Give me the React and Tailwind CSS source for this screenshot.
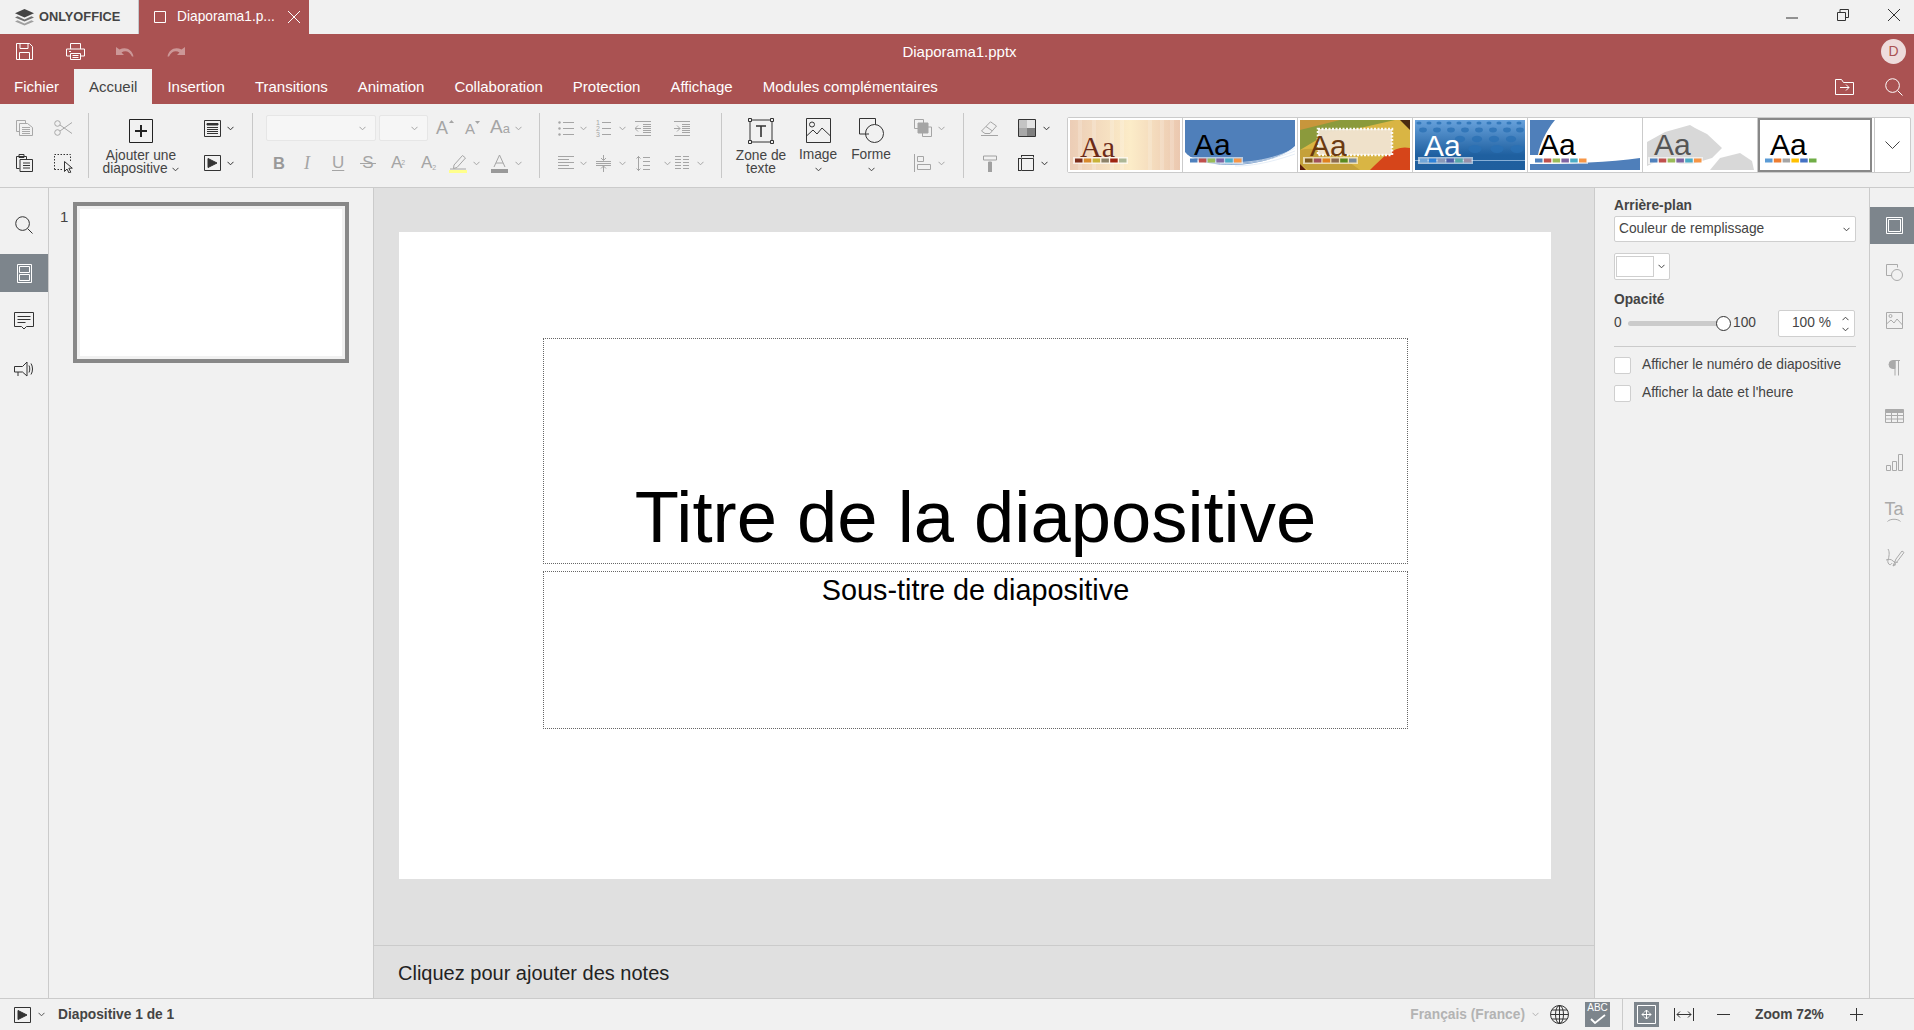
// App.jsx
import React from 'react';

const Ic = ({ w, h, className = '', children }) => (
  <svg width={w} height={h} viewBox={`0 0 ${w} ${h}`} fill="none" stroke="currentColor" strokeWidth="1" className={`shrink-0 ${className}`}>{children}</svg>
);

const Chev = ({ className = '' }) => (
  <Ic w={7} h={5} className={className}><path d="M.5.8 3.500 3.800 6.500.8" /></Ic>
);

const Logo = () => (
  <svg width="19" height="17" viewBox="0 0 19 17" className="shrink-0">
    <path d="M0 12.400l2.500-1.100 7 3.100 7-3.100 2.500 1.100-9.500 4.200z" fill="#a0a0a0" />
    <path d="M0 8.400l2.500-1.100 7 3.100 7-3.100 2.500 1.100-9.500 4.200z" fill="#707070" />
    <path d="M9.500 0 19 4.200 9.500 8.400 0 4.200z" fill="#444" />
  </svg>
);

const SaveIcon = () => <Ic w={17} h={17}><path d="M.5.500h13l3 3v13H.5zM4 .500v5h8v-5M3.500 16.500v-7h10v7" /></Ic>;
const PrintIcon = () => <Ic w={19} h={17}><path d="M4.500 6V.500h10V6M4.500 13H.5V6h18v7h-4M4.500 10.500h10v6h-10zM6.500 12.500h6M6.500 14.500h6M3 8.500h2" /></Ic>;
const UndoIcon = () => <svg width="18" height="11" viewBox="0 0 18 11" fill="currentColor" className="shrink-0"><path d="M0 1v8h8L5.500 6.500C9 4 13.500 5 16 10.500h1.500C16 3.500 10 .5 3.500 3.500z" /></svg>;
const RedoIcon = () => <svg width="18" height="11" viewBox="0 0 18 11" fill="currentColor" className="shrink-0"><path d="M18 1v8h-8l2.500-2.500C9 4 4.500 5 2 10.500H.5C2 3.500 8 .5 14.500 3.500z" /></svg>;
const SearchIcon = ({ s = 18 }) => <Ic w={s} h={s}><circle cx={s * 0.42} cy={s * 0.42} r={s * 0.38} /><path d={`M${s * 0.7} ${s * 0.7} ${s - 0.5} ${s - 0.5}`} /></Ic>;

const CopyIcon = () => <Ic w={17} h={16}><path d="M3.500 11.500h-3V.5h9v3M3.500 3.500h8l5 4v8h-13zM6 7.500h8M6 9.500h8M6 11.500h8M6 13.500h8" /></Ic>;
const CutIcon = () => <Ic w={19} h={16}><circle cx="3.500" cy="3.500" r="2.800" /><circle cx="3.500" cy="12.500" r="2.800" /><path d="M6 5l12 8.500M6 11 18 2.500" /></Ic>;
const PasteIcon = () => <Ic w={17} h={18}><path d="M3.500 14.500h-3v-12h10v3M3 .5h5v3H3zM4 5.500h12.500v12H4zM7 9h7M7 11.500h7M7 14h7" /></Ic>;
const SelectIcon = () => (
  <Ic w={19} h={19}>
    <path d="M.5 15.500V.5h16v8" strokeDasharray="1.500 1.500" />
    <path d="M.5 15.500h8" strokeDasharray="1.500 1.500" />
    <path d="M10.500 7.500v10l2.500-2.500 2 4 1.800-.8-2-4h3.500z" fill="#f1f1f1" />
  </Ic>
);
const LayoutIcon = () => <Ic w={17} h={17}><path d="M.5.500h16v16H.5z" /><path d="M3 3.500h11v1.500H3z" fill="currentColor" /><path d="M3 7.500h11M3 9.500h11M3 11.500h11M3 13.500h11" /></Ic>;
const PlayBox = ({ w = 17 }) => <Ic w={w} h={w - 1}><path d={`M.5.500h${w - 1}v${w - 2}H.5z`} /><path d="M4 3.500 13 8l-9 4.500z" fill="currentColor" /></Ic>;
const PlusBox = () => <Ic w={24} h={24} className="text-[#222]"><path d="M.5.500h23v23H.5z" /><path d="M12 6v12M6 12h12" strokeWidth="2" /></Ic>;

const FontUp = () => <div className="relative w-[14px] h-[18px] text-[#a5a5a5]"><span className="absolute -left-[1px] top-0 text-[18px] leading-[18px]">A</span><svg width="5" height="3" className="absolute -right-[3px] top-[1px]"><path d="M0 3 2.500 0 5 3z" fill="currentColor" /></svg></div>;
const FontDown = () => <div className="relative w-[13px] h-[15px] text-[#a5a5a5]"><span className="absolute left-0 top-0 text-[15px] leading-[15px]">A</span><svg width="5" height="3" className="absolute -right-[2px] top-[0px]"><path d="M0 0 2.500 3 5 0z" fill="currentColor" /></svg></div>;

const BulletIcon = () => <Ic w={16} h={15}><path d="M5 1.500h11M5 7.500h11M5 13.500h11" /><circle cx="1.500" cy="1.500" r="1.200" fill="currentColor" stroke="none" /><circle cx="1.500" cy="7.500" r="1.200" fill="currentColor" stroke="none" /><circle cx="1.500" cy="13.500" r="1.200" fill="currentColor" stroke="none" /></Ic>;
const NumberIcon = () => <div className="relative w-[15px] h-[15px] text-[#a5a5a5]"><span className="absolute left-0 -top-[1px] text-[7px] leading-[6px] w-[4px]">1<br />2<br />3</span><svg width="9" height="13" className="absolute right-0 top-[1px]" stroke="currentColor"><path d="M0 .5h9M0 6.500h9M0 12.500h9" /></svg></div>;
const IndentDec = () => <Ic w={16} h={15}><path d="M0 .5h16M0 14.500h16M8 3.500h8M8 5.500h8M8 7.500h8M8 9.500h8M8 11.500h8M6 7.500H0M3 4.500l-3 3 3 3" /></Ic>;
const IndentInc = () => <Ic w={16} h={15}><path d="M0 .5h16M0 14.500h16M8 3.500h8M8 5.500h8M8 7.500h8M8 9.500h8M8 11.500h8M0 7.500h6M3 4.500l3 3-3 3" /></Ic>;
const AlignIcon = () => <Ic w={16} h={15}><path d="M0 .5h16M0 3.500h11M0 6.500h16M0 9.500h11M0 12.500h16" /></Ic>;
const VAlignIcon = () => <Ic w={15} h={17}><path d="M0 8.500h15M0 6.500h15M7.500 0v5M5 3l2.500 2.500L10 3M7.500 17v-6M5 13.500 7.500 11l2.500 2.500M0 10.500h15" /></Ic>;
const LineSpaceIcon = () => <Ic w={14} h={15}><path d="M2.500 0v15M.5 2.500l2-2 2 2M.5 12.500l2 2 2-2M7 1.500h7M7 5.500h7M7 9.500h7M7 13.500h7" /></Ic>;
const ColumnsIcon = () => <Ic w={14} h={15}><path d="M0 .5h6M0 3.500h6M0 6.500h6M0 9.500h6M0 12.500h6M8 .5h6M8 3.500h6M8 6.500h6M8 9.500h6M8 12.500h6" /></Ic>;

const TextBoxIcon = () => (
  <Ic w={26} h={26} className="text-[#333]">
    <path d="M2 2h22v22H2z" />
    <path d="M.5.500h3v3h-3zM22.500.500h3v3h-3zM.5 22.500h3v3h-3zM22.500 22.500h3v3h-3z" fill="#f1f1f1" />
    <path d="M8 8h10M13 8v11" strokeWidth="1.600" />
  </Ic>
);
const ImageIcon = () => <Ic w={25} h={25} className="text-[#333]"><path d="M.5.500h24v24H.5z" /><circle cx="6" cy="6.500" r="2.500" /><path d="M.5 18 7 12l4 4 5-6 8.500 8" /></Ic>;
const ShapeIcon = () => <Ic w={25} h={25} className="text-[#333]"><path d="M10 16H.5V.5h16v6" /><circle cx="15.500" cy="15.500" r="9" /></Ic>;
const ArrangeIcon = () => <Ic w={18} h={18}><path d="M.5.500h9v9H.5z" /><path d="M4 4h10v10H4z" fill="currentColor" /><path d="M14 8h3.500v9.500h-9V14" /></Ic>;
const AlignObjIcon = () => <Ic w={18} h={18}><path d="M.5 0v18M3.500 2.500h6v5h-6zM3.500 10.500h13v5h-13z" /></Ic>;
const EraserIcon = () => <Ic w={17} h={15}><path d="M.5 10 9.500.8l6 4.200-6.500 7.500H4zM5 5.500l6 4.200M0 14.500h17" /></Ic>;
const PaintIcon = () => <Ic w={14} h={17} className="text-[#a0a0a0]"><path d="M.5 1h13v4H.5zM13.500 3h0M6.500 5v0" /><path d="M5.500 7h3v10h-3z" fill="currentColor" /></Ic>;
const SchemeIcon = () => (
  <Ic w={18} h={18} className="text-[#333]">
    <path d="M.5.500h17v17H.5z" />
    <path d="M1 1h8v8H1z" fill="#c4c4c4" stroke="none" />
    <path d="M9 1h8v8H9z" fill="#e4e4e4" stroke="none" />
    <path d="M1 9h8v8H1z" fill="#a8a8a8" stroke="none" />
    <path d="M9 9h8v8H9z" fill="#808080" stroke="none" />
  </Ic>
);
const SlideSizeIcon = () => <Ic w={16} h={16} className="text-[#333]"><path d="M3.500 3.500h12v12h-12zM.5 3.500v12M0 3.500h3M0 15.500h3M3.500.5h12M3.500 0v2.500M15.500 0v2.500" /></Ic>;

const SideSlides = () => <Ic w={15} h={19} className="text-white"><path d="M.5.500h14v18H.5zM2.500 2.500h10v6h-10zM2.500 10.500h10v6h-10z" /></Ic>;
const ChatIcon = () => <Ic w={20} h={18} className="text-[#333]"><path d="M.5.500h19v14h-7L10 17l-2.500-2.500h-7zM3.500 4.500h13M3.500 7.500h13M3.500 10.500h8" /></Ic>;
const SpeakerIcon = () => <Ic w={20} h={16} className="text-[#333]"><path d="M.5 5.500h8L13 1v14l-4.500-4h-8zM4 11v4M15 4.500c1 2 1 5 0 7M17 2.500c2 3 2 8 0 11" /></Ic>;

const ThemeSwatches = ({ colors, strip = true }) => (
  <g>
    {strip && <rect x="3" y="37" width="55" height="7" fill="#fff" opacity=".6" />}
    {colors.map((c, i) => <rect key={c + i} x={5 + i * 8.800} y="38.500" width="7.500" height="4" fill={c} />)}
  </g>
);

const ThemeAa = ({ fill, serif, x = 12, y = 36 }) => (
  <text x={x} y={y} fontSize="30" fill={fill} fontFamily={serif ? 'Liberation Serif, serif' : 'Liberation Sans, sans-serif'}>Aa</text>
);

const office = ['#4f81bd', '#c0504d', '#9bbb59', '#8064a2', '#4bacc6', '#f79646'];

const Theme1 = () => (
  <svg width="110" height="50" viewBox="0 0 110 50">
    <defs><linearGradient id="t1" x1="0" x2="1" y1="0" y2="0"><stop offset="0" stopColor="#eccdb6" /><stop offset=".55" stopColor="#fcecc8" /><stop offset="1" stopColor="#ebc8b0" /></linearGradient></defs>
    <rect width="110" height="50" fill="url(#t1)" />
    {[8, 22, 40, 50, 78, 90, 100].map(x => <rect key={x} x={x} width="4" height="50" fill="#fff" opacity=".18" />)}
    <ThemeAa fill="#6b2a18" serif x={10} y={37} />
    <ThemeSwatches colors={['#7f2f1c', '#d88a2c', '#c9b33a', '#8d8269', '#9e2411', '#acb796']} />
  </svg>
);
const Theme2 = () => (
  <svg width="110" height="50" viewBox="0 0 110 50">
    <rect width="110" height="50" fill="#fff" />
    <path d="M0 0h110v26C95 40 60 48 30 44 15 42 5 38 0 32z" fill="#4f7fba" />
    <path d="M22 41C55 46 90 40 110 28M35 44C65 46 95 37 110 31M50 46C75 46 98 38 110 34" stroke="#dbe7f4" strokeWidth=".7" fill="none" />
    <ThemeAa fill="#000" x={9} y={35} />
    <ThemeSwatches colors={office} />
  </svg>
);
const Theme3 = () => (
  <svg width="110" height="50" viewBox="0 0 110 50">
    <rect width="110" height="50" rx="3" fill="#d9b544" />
    <path d="M0 8 35 0h60L60 8 30 12 0 30z" fill="#8b9a3c" />
    <path d="M0 0h40L0 10z" fill="#c8963c" />
    <path d="M110 28C95 25 85 35 70 50h40z" fill="#d6451a" />
    <path d="M0 30C20 25 40 35 60 50H8L0 44z" fill="#c5a13a" />
    <path d="M100 0h10v10z" fill="#4a2c10" />
    <path d="M0 44 6 50H0z" fill="#5a1c0c" />
    <rect x="18" y="9" width="74" height="26" fill="#f1e4d2" opacity=".95" stroke="#fff" strokeWidth="2.500" strokeDasharray="2 1.500" />
    <ThemeAa fill="#6b3a10" x={10} y={36} />
    <ThemeSwatches colors={['#7f5a1f', '#a0505a', '#e0801f', '#8c6a50', '#5a8a1f', '#7a8a9a']} />
  </svg>
);
const Theme4 = () => (
  <svg width="110" height="50" viewBox="0 0 110 50">
    <defs><linearGradient id="t4" x1="0" x2="0" y1="0" y2="1"><stop offset="0" stopColor="#68a2dc" /><stop offset=".7" stopColor="#1f60a0" /><stop offset="1" stopColor="#1f5f9e" /></linearGradient></defs>
    <rect width="110" height="50" fill="url(#t4)" />
    {[[4, 3, 2], [14, 3, 2], [24, 3, 2], [34, 3, 2], [44, 3, 2], [54, 3, 2], [64, 3, 2], [74, 3, 2], [84, 3, 2], [94, 3, 2], [104, 3, 2],
      [8, 10, 3], [22, 10, 3], [36, 10, 3], [50, 10, 3], [64, 10, 3], [78, 10, 3], [92, 10, 3], [105, 10, 3],
      [45, 19, 4], [62, 19, 4], [79, 19, 4], [96, 19, 4], [60, 29, 5], [82, 29, 5], [102, 29, 5]].map(([cx, cy, r]) => (
      <ellipse key={`${cx}-${cy}`} cx={cx} cy={cy} rx={r * 1.300} ry={r * 0.800} fill="#2a70b4" opacity=".8" />
    ))}
    <rect y="40" width="110" height=".8" fill="#a0c4e4" />
    <ThemeAa fill="#fff" x={9} y={36} />
    <ThemeSwatches colors={['#6fa5d8', '#2f82d8', '#8a98b8', '#5060a8', '#58a8a8', '#9a90a8']} />
  </svg>
);
const Theme5 = () => (
  <svg width="110" height="50" viewBox="0 0 110 50">
    <rect width="110" height="50" fill="#fff" />
    <path d="M0 0h25C15 12 10 25 8 35H0z" fill="#4f7fba" />
    <path d="M0 44C40 44 80 42 110 38v12H0z" fill="#4f7fba" />
    <ThemeAa fill="#000" x={9} y={35} />
    <ThemeSwatches colors={office} />
  </svg>
);
const Theme6 = () => (
  <svg width="110" height="50" viewBox="0 0 110 50">
    <rect width="110" height="50" fill="#fff" />
    <path d="M2 22 20 12 45 5l5 3H30L50 8l12 6 15 14-10 10-20 6 H35 L20 38 L2 46z" fill="#d8d8d8" />
    <path d="M75 38 95 33l12 8 2 9H65z" fill="#d8d8d8" />
    <ThemeAa fill="#555" x={9} y={35} />
    <ThemeSwatches colors={office} />
  </svg>
);
const Theme7 = () => (
  <svg width="110" height="50" viewBox="0 0 110 50">
    <rect width="110" height="50" fill="#fff" />
    <ThemeAa fill="#000" x={10} y={35} />
    <ThemeSwatches strip={false} colors={['#5b9bd5', '#ed7d31', '#a5a5a5', '#ffc000', '#4472c4', '#70ad47']} />
  </svg>
);

const tabs = ['Fichier', 'Accueil', 'Insertion', 'Transitions', 'Animation', 'Collaboration', 'Protection', 'Affichage', 'Modules complémentaires'];

const Sep = () => <div className="w-px h-[65px] mt-[9px] bg-[#c8c8c8] shrink-0" />;

const BigButton = ({ width, icon, lines, chevron }) => (
  <div className={`flex flex-col items-center pt-[14px] ${width}`}>
    {icon}
    <div className="mt-[5px] text-center text-[13.75px] leading-[13px] text-[#444]">
      {lines.map((l, i) => <div key={i}>{l}</div>)}
    </div>
    {chevron && <Chev className="mt-[6px] text-[#444]" />}
  </div>
);

const Toolbar = () => (
  <div className="flex h-[84px] bg-[#f1f1f1] border-b border-[#cbcbcb] shrink-0">
    {/* presse-papiers */}
    <div className="w-[88px] pl-[16px] pt-[11px] shrink-0">
      <div className="flex items-center h-[26px] text-[#a8a8a8]"><CopyIcon /><div className="ml-[21px]"><CutIcon /></div></div>
      <div className="flex items-center h-[26px] mt-[9px] text-[#333]"><PasteIcon /><div className="ml-[21px]"><SelectIcon /></div></div>
    </div>
    <Sep />
    {/* diapositives */}
    <div className="flex w-[163px] shrink-0">
      <BigButton width="w-[104px]" icon={<div className="h-[26px] pt-[1px]"><PlusBox /></div>} lines={['Ajouter une', <span key="d">diapositive <Chev className="inline ml-[1px]" /></span>]} />
      <div className="ml-[11px] pt-[11px] text-[#333]">
        <div className="flex items-center h-[26px]"><LayoutIcon /><Chev className="ml-[6px]" /></div>
        <div className="flex items-center h-[26px] mt-[9px]"><PlayBox /><Chev className="ml-[6px]" /></div>
      </div>
    </div>
    <Sep />
    {/* police */}
    <div className="w-[286px] pl-[13px] pt-[11px] shrink-0 text-[#a5a5a5]">
      <div className="flex items-center h-[26px]">
        <div className="w-[110px] h-[26px] flex items-center justify-end pr-[9px] bg-[#f6f6f6] border border-[#e6e6e6] rounded-[2px]"><Chev /></div>
        <div className="w-[49px] ml-[3px] h-[26px] flex items-center justify-end pr-[9px] bg-[#f6f6f6] border border-[#e6e6e6] rounded-[2px]"><Chev /></div>
        <div className="ml-[9px]"><FontUp /></div>
        <div className="ml-[14px]"><FontDown /></div>
        <div className="ml-[12px] w-[19px] text-[19px] leading-[18px] whitespace-nowrap">A<span className="text-[13px]">a</span></div>
        <Chev className="ml-[6px]" />
      </div>
      <div className="flex items-center h-[26px] mt-[9px]">
        <span className="ml-[7px] w-[11px] font-bold text-[16.500px] leading-[16px] text-[#999]">B</span>
        <span className="ml-[20px] w-[8px] italic text-[18px] leading-[16px] font-['Liberation_Serif',serif]">I</span>
        <span className="ml-[20px] w-[12px] underline underline-offset-2 text-[17px] leading-[16px]">U</span>
        <span className="relative ml-[16px] w-[16px] text-center text-[17px] leading-[16px]">
          S
          <span className="absolute left-0 right-0 top-[8px] h-px bg-[#a5a5a5]" />
        </span>
        <span className="ml-[15px] w-[15px] text-[17px] leading-[16px] whitespace-nowrap">A<sup className="text-[7px] -ml-[1px]">2</sup></span>
        <span className="ml-[15px] w-[17px] text-[17px] leading-[16px] whitespace-nowrap">A<sub className="text-[7px]">2</sub></span>
        <div className="ml-[11px]">
          <Ic w={18} h={19}>
            <path d="M5 11 13.500 1.500l3 2.500L8 13.500 4.500 14.500zM1 15h16" />
            <rect y="16" width="18" height="3" fill="#ffff8c" stroke="none" />
          </Ic>
        </div>
        <Chev className="ml-[6px]" />
        <div className="ml-[11px]">
          <Ic w={17} h={19}>
            <path d="M3 13 8.500 1 14 13M5 9h7" />
            <rect y="15" width="17" height="4" fill="#999" stroke="none" />
          </Ic>
        </div>
        <Chev className="ml-[7px]" />
      </div>
    </div>
    <Sep />
    {/* paragraphe */}
    <div className="w-[181px] pl-[18px] pt-[11px] shrink-0 text-[#a5a5a5]">
      <div className="flex items-center h-[26px]">
        <BulletIcon /><Chev className="ml-[6px]" />
        <div className="ml-[9px]"><NumberIcon /></div><Chev className="ml-[8px]" />
        <div className="ml-[9px]"><IndentDec /></div>
        <div className="ml-[23px]"><IndentInc /></div>
      </div>
      <div className="flex items-center h-[26px] mt-[9px]">
        <AlignIcon /><Chev className="ml-[6px]" />
        <div className="ml-[9px]"><VAlignIcon /></div><Chev className="ml-[8px]" />
        <div className="ml-[10px]"><LineSpaceIcon /></div><Chev className="ml-[14px]" />
        <div className="ml-[4px]"><ColumnsIcon /></div><Chev className="ml-[8px]" />
      </div>
    </div>
    <Sep />
    {/* insertion */}
    <div className="flex w-[241px] pl-[4px] shrink-0">
      <BigButton width="w-[70px]" icon={<TextBoxIcon />} lines={['Zone de', 'texte']} />
      <BigButton width="w-[44px]" icon={<ImageIcon />} lines={['Image']} chevron />
      <BigButton width="w-[62px]" icon={<ShapeIcon />} lines={['Forme']} chevron />
      <div className="ml-[12px] pt-[11px] text-[#a5a5a5]">
        <div className="flex items-center h-[26px]"><ArrangeIcon /><Chev className="ml-[6px]" /></div>
        <div className="flex items-center h-[26px] mt-[9px]"><AlignObjIcon /><Chev className="ml-[6px]" /></div>
      </div>
    </div>
    <Sep />
    {/* format */}
    <div className="w-[103px] pl-[17px] pt-[11px] shrink-0">
      <div className="flex items-center h-[26px] text-[#a5a5a5]">
        <EraserIcon /><div className="ml-[20px]"><SchemeIcon /></div><Chev className="ml-[7px] text-[#333]" />
      </div>
      <div className="flex items-center h-[26px] mt-[9px]">
        <div className="ml-[2px]"><PaintIcon /></div><div className="ml-[21px]"><SlideSizeIcon /></div><Chev className="ml-[7px] text-[#333]" />
      </div>
    </div>
    {/* themes */}
    <div className="flex flex-1 h-[56px] mt-[13px] mr-[3px] bg-white border border-[#cbcbcb] rounded-[2px]">
      {[Theme1, Theme2, Theme3, Theme4, Theme5, Theme6].map((T, i) => (
        <div key={i} className="w-[115px] h-full flex items-center justify-center border-r border-[#cbcbcb] bg-white"><T /></div>
      ))}
      <div className="w-[114px] mr-[2px] h-full flex items-center justify-center border-[2px] border-[#888] bg-white"><Theme7 /></div>
      <div className="flex-1 flex items-center justify-center border-l border-[#cbcbcb] text-[#444]">
        <Ic w={15} h={9}><path d="M.5.500 7.500 7.500 14.500.5" /></Ic>
      </div>
    </div>
  </div>
);

const LeftBar = () => (
  <div className="w-[49px] shrink-0 border-r border-[#cbcbcb] pt-[18px] text-[#333]">
    <div className="h-[38px] mb-[10px] flex items-center justify-center"><SearchIcon /></div>
    <div className="h-[38px] mb-[10px] flex items-center justify-center bg-[#7d858c]"><SideSlides /></div>
    <div className="h-[38px] mb-[10px] flex items-center justify-center"><ChatIcon /></div>
    <div className="h-[38px] flex items-center justify-center"><SpeakerIcon /></div>
  </div>
);

const Thumbs = () => (
  <div className="w-[325px] shrink-0 border-r border-[#cbcbcb] pt-[14px] flex">
    <div className="w-[24px] pl-[11px] pt-[6px] text-[15px] leading-[18px] text-[#444]">1</div>
    <div className="w-[276px] h-[161px] border-4 border-[#888] p-[3px]">
      <div className="w-full h-full bg-white" />
    </div>
  </div>
);

const Slide = () => (
  <div className="flex-1 pl-[25px] pt-[44px] min-h-0">
    <div className="w-[1152px] h-[647px] bg-white pt-[106px] pl-[144px]">
      <div className="w-[865px] h-[226px] flex items-end justify-center border border-dotted border-[#666] text-[72.400px] leading-[83px] text-black pb-[5px]">
        Titre de la diapositive
      </div>
      <div className="w-[865px] h-[158px] mt-[7px] text-center border border-dotted border-[#666] text-[28.800px] leading-[33px] text-black pt-[2px]">
        Sous-titre de diapositive
      </div>
    </div>
  </div>
);

const Field = ({ className = '', children }) => (
  <div className={`bg-white border border-[#cfcfcf] rounded-[2px] flex items-center ${className}`}>{children}</div>
);

const RightPanel = () => (
  <div className="w-[275px] shrink-0 border-l border-[#cbcbcb] pl-[19px] pr-[13px] text-[13.750px] text-[#444]">
    <div className="mt-[10px] font-bold leading-[16px]">Arrière-plan</div>
    <Field className="mt-[2px] h-[26px] w-[242px] px-[4px] justify-between">
      <span>Couleur de remplissage</span>
      <Chev className="mr-[1px]" />
    </Field>
    <Field className="mt-[11px] h-[27px] w-[56px]">
      <div className="ml-[1px] w-[38px] h-[21px] border border-[#cfcfcf] bg-white" />
      <Chev className="ml-[4px]" />
    </Field>
    <div className="mt-[12px] font-bold leading-[16px]">Opacité</div>
    <div className="flex items-center h-[27px] mt-[2px]">
      <span className="w-[14px]">0</span>
      <div className="w-[95px] h-[5px] bg-[#cbcbcb] rounded-full relative">
        <div className="absolute -right-[8px] -top-[5px] w-[15px] h-[15px] rounded-full bg-white border border-[#333]" />
      </div>
      <span className="ml-[10px]">100</span>
      <Field className="ml-[22px] h-[27px] w-[77px] pl-[13px] justify-between">
        <span>100 %</span>
        <div className="flex flex-col gap-[6px] mr-[5px]">
          <Chev className="rotate-180" />
          <Chev />
        </div>
      </Field>
    </div>
    <div className="mt-[9px] h-px w-[242px] bg-[#cbcbcb]" />
    <label className="flex items-center mt-[10px] h-[17px]">
      <span className="w-[17px] h-[17px] bg-white border border-[#cfcfcf] rounded-[2px]" />
      <span className="ml-[11px]">Afficher le numéro de diapositive</span>
    </label>
    <label className="flex items-center mt-[11px] h-[17px]">
      <span className="w-[17px] h-[17px] bg-white border border-[#cfcfcf] rounded-[2px]" />
      <span className="ml-[11px]">Afficher la date et l'heure</span>
    </label>
  </div>
);

const RightBar = () => (
  <div className="w-[45px] shrink-0 border-l border-[#cbcbcb] pt-[19px] text-[#aaa]">
    <div className="h-[37px] mb-[10px] pl-[4px] flex items-center justify-center bg-[#7d858c]">
      <Ic w={17} h={17} className="text-white"><path d="M.5.500h16v16H.5zM2.500 2.500h12v12h-12z" /></Ic>
    </div>
    <div className="h-[37px] mb-[11px] pl-[4px] flex items-center justify-center"><Ic w={17} h={17}><path d="M6 11.500H.5V.5h11v3" /><circle cx="11" cy="11" r="5.500" /></Ic></div>
    <div className="h-[37px] mb-[10px] pl-[4px] flex items-center justify-center"><Ic w={17} h={17}><path d="M.5.500h16v16H.5z" /><circle cx="4.500" cy="4" r="1.500" /><path d="M.5 12 5 8l3 3 3-4 5.500 6" /></Ic></div>
    <div className="h-[37px] mb-[11px] pl-[4px] flex items-center justify-center"><Ic w={12} h={16}><path d="M6 .5h6M7 .5v15M10.500.5v15" /><path d="M7 .5H5a3.500 3.500 0 0 0 0 8h2z" fill="currentColor" /></Ic></div>
    <div className="h-[37px] mb-[10px] pl-[4px] flex items-center justify-center"><Ic w={19} h={14}><path d="M.5 3.500h18v10H.5zM.5 6.500h18M.5 10h18M6.500 3.500v10M12.500 3.500v10" /><path d="M.5.500h18v3H.5z" fill="currentColor" /></Ic></div>
    <div className="h-[37px] mb-[12px] pl-[4px] flex items-center justify-center"><Ic w={17} h={17}><path d="M.5 11.500h4v5h-4zM6.500 7.500h4v9h-4zM12.500.5h4v16h-4z" /></Ic></div>
    <div className="h-[37px] mb-[10px] pl-[4px] flex flex-col items-center justify-center">
      <span className="text-[18px] leading-[17px]">Ta</span>
      <Ic w={14} h={4}><path d="M.5 3.500C3 .5 11 .5 13.500 3.500" /></Ic>
    </div>
    <div className="h-[37px] pl-[4px] flex items-center justify-center"><Ic w={21} h={21}><path d="M2 12c3-1 5-1 7 1 1 1 3 2 5 1M4 1c2 3 1 8 0 11-1 3 2 7 4 3" /><path d="M9 18 12 11l6-8 2 1.500-6 8zM9 18l3-1.500" /></Ic></div>
  </div>
);

const StatusBar = () => (
  <div className="h-[32px] shrink-0 flex items-center border-t border-[#cbcbcb] bg-[#f1f1f1] pl-[14px] pr-[51px] text-[13.750px] font-bold">
    <div className="text-[#333]"><PlayBox /></div>
    <Chev className="ml-[7px] text-[#555]" />
    <span className="ml-[13px] mt-[1px] text-[#444]">Diapositive 1 de 1</span>
    <span className="ml-auto mt-[1px] text-[#b3b3b3]">Français (France)</span>
    <Chev className="ml-[7px] text-[#b3b3b3]" />
    <div className="ml-[11px] text-[#333]">
      <Ic w={19} h={19}><circle cx="9.500" cy="9.500" r="9" /><ellipse cx="9.500" cy="9.500" rx="4" ry="9" /><path d="M9.500.5v18M.5 9.500h18M2 5h15M2 14h15" /></Ic>
    </div>
    <div className="ml-[16px] w-[25px] h-[25px] bg-[#7d858c] flex flex-col items-center text-white">
      <span className="text-[10px] leading-[12px] font-normal">ABC</span>
      <Ic w={16} h={10}><path d="M1 5l4 4 10-8" strokeWidth="1.800" /></Ic>
    </div>
    <div className="ml-[12px] w-px h-[31px] bg-[#cbcbcb]" />
    <div className="ml-[11px] w-[25px] h-[25px] bg-[#7d858c] flex items-center justify-center">
      <Ic w={19} h={19} className="text-white"><path d="M.5.500h18v18H.5zM9.500 5v9M7.500 7l2-2 2 2M7.500 12l2 2 2-2M5 9.500h9M7 7.500l-2 2 2 2M12 7.500l2 2-2 2" /></Ic>
    </div>
    <div className="ml-[15px] text-[#333]"><Ic w={20} h={13}><path d="M.5 0v13M19.500 0v13M3 6.500h14M6 3.500l-3 3 3 3M14 3.500l3 3-3 3" /></Ic></div>
    <div className="ml-[23px] text-[#333]"><Ic w={13} h={3}><path d="M0 1.500h13" /></Ic></div>
    <span className="ml-[25px] mt-[1px] w-[69px] whitespace-nowrap text-[#444]">Zoom 72%</span>
    <div className="ml-[26px] text-[#333]"><Ic w={13} h={13}><path d="M0 6.500h13M6.500 0v13" /></Ic></div>
  </div>
);

export default function App() {
  return (
    <div className="h-screen w-full flex flex-col overflow-hidden bg-[#f1f1f1] font-['Liberation_Sans',Arial,sans-serif]">
      {/* barre de titre */}
      <div className="h-[34px] shrink-0 flex items-center">
        <div className="w-[139px] h-full flex items-center pl-[15px] border-r border-[#c4c8cc]">
          <Logo />
          <span className="ml-[5px] text-[12.800px] font-bold text-[#444]">ONLYOFFICE</span>
        </div>
        <div className="w-[170px] h-full bg-[#aa5252] flex items-center pl-[15px] text-white">
          <Ic w={12} h={12}><path d="M.5.500h11v11H.5z" /></Ic>
          <span className="ml-[11px] text-[13.750px] w-[111px]">Diaporama1.p...</span>
          <Ic w={12} h={12}><path d="M0 0l12 12M12 0 0 12" /></Ic>
        </div>
        <div className="ml-auto mr-[14px] h-full pt-[9px] flex items-start text-[#333]">
          <div className="mt-[8px]"><Ic w={12} h={2}><path d="M0 1h12" /></Ic></div>
          <div className="ml-[39px]"><Ic w={12} h={12}><path d="M.5 3.500h8v8h-8zM3 3.500v-3h8.500v8h-3" /></Ic></div>
          <div className="ml-[39px]"><Ic w={12} h={12}><path d="M0 0l12 12M12 0 0 12" /></Ic></div>
        </div>
      </div>
      {/* en-tete rouge */}
      <div className="h-[70px] shrink-0 bg-[#aa5252] text-white flex flex-col">
        <div className="h-[35px] grid grid-cols-[1fr_auto_1fr] items-center">
          <div className="flex items-center pl-[16px]">
            <SaveIcon />
            <div className="ml-[33px]"><PrintIcon /></div>
            <div className="ml-[31px] opacity-40"><UndoIcon /></div>
            <div className="ml-[33px] opacity-40"><RedoIcon /></div>
          </div>
          <div className="text-[15px] pl-[5px] pt-[1px]">Diaporama1.pptx</div>
          <div className="flex justify-end pr-[8px]">
            <div className="w-[25px] h-[25px] rounded-full bg-[#eedcdc] text-[#aa5252] text-[14px] flex items-center justify-center">D</div>
          </div>
        </div>
        <div className="h-[35px] flex items-end">
          {tabs.map((t, i) => (
            <div key={t} className={`h-[35px] pr-[15px] pt-[1px] flex items-center text-[15px] ${i === 0 ? 'pl-[14px]' : 'pl-[15px]'} ${t === 'Accueil' ? 'bg-[#f1f1f1] text-[#444]' : ''}`}>{t}</div>
          ))}
          <div className="ml-auto flex items-center h-full pr-[11px]">
            <Ic w={19} h={16}><path d="M.5 15.500V.5h6l2 3h10v12zM5 8.500h9M11 5.500l3 3-3 3" /></Ic>
            <div className="ml-[31px]"><SearchIcon /></div>
          </div>
        </div>
      </div>
      <Toolbar />
      {/* zone principale */}
      <div className="flex-1 flex min-h-0">
        <LeftBar />
        <Thumbs />
        <div className="flex-1 flex flex-col bg-[#e0e0e0] min-w-0">
          <Slide />
          <div className="h-[53px] shrink-0 border-t border-[#cbcbcb] pl-[24px] pt-[1px] flex items-center text-[20px] text-[#222]">Cliquez pour ajouter des notes</div>
        </div>
        <RightPanel />
        <RightBar />
      </div>
      <StatusBar />
    </div>
  );
}
